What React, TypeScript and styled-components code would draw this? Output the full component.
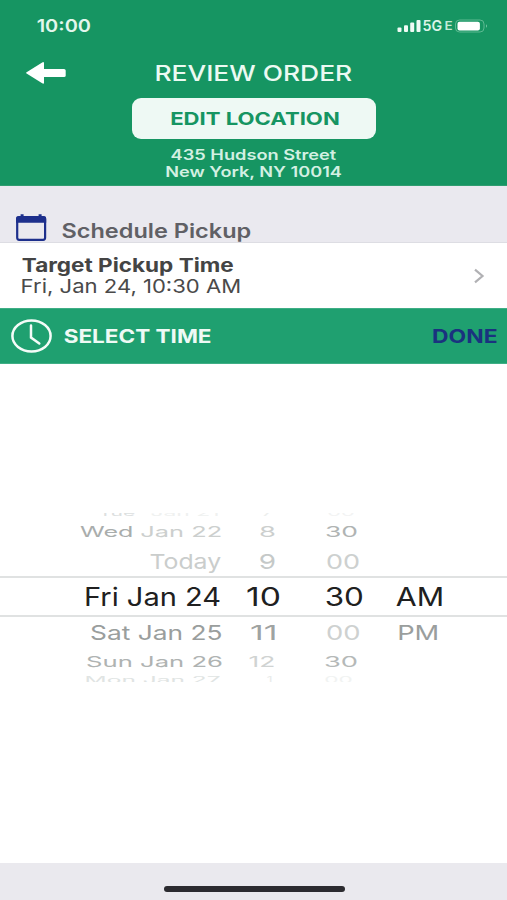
import React, { useLayoutEffect, useRef, useState } from "react";
import styled, { createGlobalStyle } from "styled-components";

const GlobalStyle = createGlobalStyle`
  * { box-sizing: border-box; }
  body { margin: 0; background: #fff; }
  #root { font-family: Inter, "Liberation Sans", sans-serif; }
`;

const Screen = styled.div`
  display: flex;
  flex-direction: column;
  width: 507px;
  height: 900px;
  overflow: hidden;
  background: #fff;
`;

/* A label whose glyphs are stretched to fill a given width. */
interface LabelProps {
  $w: number;
  $size: number;
  $line: number;
  $weight?: number;
  $color?: string;
  $left?: number;
}

const LabelBox = styled.span<LabelProps>`
  display: block;
  flex: none;
  width: ${(p) => p.$w}px;
  height: ${(p) => p.$line}px;
  line-height: ${(p) => p.$line}px;
  margin-left: ${(p) => p.$left ?? 0}px;
  font-size: ${(p) => p.$size}px;
  font-weight: ${(p) => p.$weight ?? 400};
  color: ${(p) => p.$color ?? "#fff"};
  text-align: left;
  white-space: nowrap;
`;

const Glyphs = styled.span`
  display: inline-block;
  transform-origin: 0 50%;
`;

interface WideProps {
  text: string;
  width: number;
  size: number;
  line: number;
  weight?: number;
  color?: string;
  left?: number;
}

/* Measured at ten times the size, as canvas rounds ink bounds to whole pixels. */
const MEASURE = 10;
/* Room left on each side for antialiased edges. */
const EDGE = 0.5;

function WideText({ text, width, size, line, weight, color, left }: WideProps) {
  const ref = useRef<HTMLSpanElement>(null);
  const [transform, setTransform] = useState("none");
  useLayoutEffect(() => {
    const ctx = document.createElement("canvas").getContext("2d");
    if (!ref.current || !ctx) return;
    const cs = getComputedStyle(ref.current);
    ctx.font = `${cs.fontWeight} ${size * MEASURE}px ${cs.fontFamily}`;
    const m = ctx.measureText(text);
    const inkLeft = m.actualBoundingBoxLeft / MEASURE;
    const inkRight = m.actualBoundingBoxRight / MEASURE;
    const scale = (width - 2 * EDGE) / (inkRight + inkLeft);
    setTransform(`translateX(${inkLeft * scale + EDGE}px) scaleX(${scale})`);
  }, [text, width, size, weight]);
  return (
    <LabelBox $w={width} $size={size} $line={line} $weight={weight} $color={color} $left={left}>
      <Glyphs ref={ref} style={{ transform }}>{text}</Glyphs>
    </LabelBox>
  );
}

const Header = styled.header`
  display: flex;
  flex-direction: column;
  height: 186px;
  flex: none;
  background: #169562;
  border-bottom: 1px solid #2f9d70;
`;

const StatusBar = styled.div`
  display: flex;
  align-items: center;
  height: 34px;
  margin-top: 9px;
  padding: 0 18px 0 37px;
`;

const StatusIcons = styled.div`
  display: flex;
  align-items: center;
  margin-left: auto;
`;

const TitleRow = styled.div`
  display: flex;
  align-items: center;
  height: 46px;
  margin-top: 7px;
  padding-left: 26px;
`;

const EditButton = styled.button`
  display: flex;
  align-items: center;
  justify-content: center;
  align-self: center;
  width: 244px;
  height: 41px;
  margin: 1.5px 0 8.5px 1px;
  padding: 2px 0 0 2px;
  border: 0;
  border-radius: 9px;
  background: #eef9f4;
  font-family: inherit;
`;

const Address = styled.div`
  display: flex;
  flex-direction: column;
  align-items: center;
  gap: 1px;
`;

const SectionHeading = styled.div`
  display: flex;
  align-items: flex-start;
  flex: none;
  height: 57px;
  padding: 27px 0 0 16px;
  background: #eae9ef;
  border-bottom: 1px solid #dddde3;
`;

const TargetRow = styled.div`
  display: flex;
  align-items: center;
  justify-content: space-between;
  flex: none;
  height: 65px;
  padding: 0 22px 0 21.5px;
`;

const TargetText = styled.div`
  display: flex;
  flex-direction: column;
`;

const SelectBar = styled.div`
  display: flex;
  align-items: center;
  flex: none;
  height: 56px;
  padding-left: 11px;
  background: #1fa070;
  border-top: 1px solid #3fae85;
  border-bottom: 1px solid #3fae85;
`;

const Picker = styled.main`
  flex: 1;
  padding-top: 149px;
`;

const WheelRow = styled.div<{ $height: number; $selected?: boolean; $align?: string }>`
  display: flex;
  align-items: ${(p) => p.$align ?? "center"};
  height: ${(p) => p.$height}px;
  overflow: hidden;
  ${(p) => p.$selected && "border-top: 2px solid #e0e2e2; border-bottom: 2px solid #e0e2e2;"}
`;

const BottomBar = styled.footer`
  display: flex;
  justify-content: center;
  flex: none;
  height: 37px;
  padding: 23px 0 0 2px;
  background: #eae9ee;
`;

const HomeIndicator = styled.div`
  width: 181px;
  height: 6px;
  border-radius: 3px;
  background: #2c2b30;
`;

const BatterySvg = styled.svg`
  margin-left: 3px;
`;

const Signal = () => (
  <svg width="24" height="14" viewBox="0 0 24 14" fill="#effbf5">
    <rect x="0.5" y="8.5" width="4" height="4.5" rx="1" />
    <rect x="7" y="6.3" width="4" height="6.7" rx="1" />
    <rect x="13.2" y="3.5" width="4" height="9.5" rx="1" />
    <rect x="19.5" y="1" width="4" height="12" rx="1" />
  </svg>
);

const Battery = () => (
  <BatterySvg width="34" height="14" viewBox="0 0 34 14">
    <rect x="0.5" y="1" width="28.5" height="12" rx="4" fill="none" stroke="#5cb991" strokeWidth="1" />
    <rect x="2.500" y="2.800" width="22.400" height="8.600" rx="2" fill="#fff" />
    <path d="M31 5.200c1.400.6 1.400 3 0 3.600z" fill="#6fc29f" />
  </BatterySvg>
);

const BackArrow = () => (
  <svg width="40" height="24" viewBox="0 0 40 24" fill="#fff">
    <path d="M.6 11.200 16.200 1.400Q18 .4 18 2.400V8H38Q39.700 8 39.700 9.500V14.700Q39.700 16 38 16H18V21.400Q18 23.400 16.200 22.300L.6 12.600Q-.4 11.900.6 11.200Z" />
  </svg>
);

const CalendarIcon = () => (
  <svg width="31" height="29" viewBox="0 0 31 29">
    <rect x="1.200" y="4.200" width="27.900" height="22.600" rx="2" fill="none" stroke="#1d2f8c" strokeWidth="2.200" />
    <path d="M0 9.800V5.500Q0 3.300 2.200 3.300H4.600V1.200H7.600V3.300H22.600V1.200H25.600V3.300H28Q30.200 3.300 30.200 5.500V9.800Z" fill="#1d2f8c" />
  </svg>
);

const ClockIcon = () => (
  <svg width="42" height="34" viewBox="0 0 42 34" fill="none" stroke="#f4fcf8" strokeWidth="2.500" strokeLinecap="round">
    <ellipse cx="20.500" cy="17" rx="19.100" ry="15.500" />
    <path d="M20 6.500V18.500L28.300 24.500" />
  </svg>
);

const Chevron = () => (
  <svg width="12" height="16" viewBox="0 0 12 16" fill="none" stroke="#b1b1b4" strokeWidth="2.200">
    <path d="M2 1.700 9.500 8 2 14.300" />
  </svg>
);

/* Pieces of a wheel row: text, left edge, width, colour. */
type Piece = [string, number, number, string];
interface WheelEntry {
  height: number;
  size: number;
  line: number;
  align?: string;
  selected?: boolean;
  pieces: Piece[];
}

const wheel: WheelEntry[] = [
  {
    height: 5, size: 9, line: 10, align: "flex-end",
    pieces: [["Tue", 99, 36, "#dce0df"], ["Jan 21", 151, 67, "#eff1f0"], ["7", 262, 11, "#eceeed"], ["00", 328, 26, "#f2f3f3"]],
  },
  {
    height: 28, size: 14.5, line: 28,
    pieces: [["Wed", 80, 52, "#a9adac"], ["Jan 22", 141, 80, "#cccfce"], ["8", 260, 15, "#cccfce"], ["30", 326, 31, "#b0b4b3"]],
  },
  {
    height: 30, size: 20.5, line: 31,
    pieces: [["Today", 150, 71, "#cacdcc"], ["9", 260, 15, "#c5c9c8"], ["00", 327, 32, "#cdd0cf"]],
  },
  {
    height: 41, size: 25.5, line: 37, selected: true,
    pieces: [["Fri Jan 24", 85.5, 134, "#202020"], ["10", 247, 32.5, "#202020"], ["30", 326, 36.5, "#202020"], ["AM", 395.5, 46, "#202020"]],
  },
  {
    height: 32, size: 20, line: 32,
    pieces: [["Sat Jan 25", 90.5, 130.5, "#9a9e9d"], ["11", 250.5, 24, "#9fa3a2"], ["00", 327, 32.5, "#ced1d0"], ["PM", 399, 38.5, "#9a9e9d"]],
  },
  {
    height: 26, size: 14.5, line: 26,
    pieces: [["Sun Jan 26", 87, 135, "#afb3b2"], ["12", 249, 25, "#d0d3d2"], ["30", 325, 32, "#b5b9b8"]],
  },
  {
    height: 7, size: 9, line: 10, align: "flex-start",
    pieces: [["Mon Jan 27", 86, 134, "#e0e4e3"], ["1", 267, 5, "#e8ebea"], ["00", 325, 27, "#f1f3f2"]],
  },
];

export default function App() {
  return (
    <Screen>
      <GlobalStyle />
      <Header>
        <StatusBar>
          <WideText text="10:00" width={53.500} size={17.200} line={34} weight={600} color="#e3f7ed" />
          <StatusIcons>
            <Signal />
            <WideText text="5G" width={19} size={14.500} line={16} weight={600} color="#dcf4e8" left={2.500} />
            <WideText text="E" width={7.500} size={12} line={12} weight={600} color="#c5ead8" left={2.500} />
            <Battery />
          </StatusIcons>
        </StatusBar>
        <TitleRow>
          <BackArrow />
          <WideText text="REVIEW ORDER" width={196} size={22} line={46} weight={500} color="#ecfaf3" left={90} />
        </TitleRow>
        <EditButton>
          <WideText text="EDIT LOCATION" width={168} size={17.700} line={40} weight={700} color="#169562" />
        </EditButton>
        <Address>
          <WideText text="435 Hudson Street" width={165.500} size={14.300} line={16} weight={600} color="#d3f0e2" />
          <WideText text="New York, NY 10014" width={176} size={14.300} line={16} weight={600} color="#d3f0e2" />
        </Address>
      </Header>
      <SectionHeading>
        <CalendarIcon />
        <WideText text="Schedule Pickup" width={189} size={19.800} line={36} weight={600} color="#606065" left={15} />
      </SectionHeading>
      <TargetRow>
        <TargetText>
          <WideText text="Target Pickup Time" width={211.500} size={18.600} line={22} weight={700} color="#444" />
          <WideText text="Fri, Jan 24, 10:30 AM" width={218} size={18.800} line={21} color="#4a4a4a" />
        </TargetText>
        <Chevron />
      </TargetRow>
      <SelectBar>
        <ClockIcon />
        <WideText text="SELECT TIME" width={147} size={19.200} line={54} weight={700} color="#eefaf5" left={10.500} />
        <WideText text="DONE" width={64} size={18.800} line={55} weight={700} color="#1a327f" left={222} />
      </SelectBar>
      <Picker>
        {wheel.map((row, i) => (
          <WheelRow key={i} $height={row.height} $selected={row.selected} $align={row.align}>
            {row.pieces.map(([text, x, w, color], j) => {
              const prev = row.pieces[j - 1];
              return (
                <WideText
                  key={j}
                  text={text}
                  width={w}
                  size={row.size}
                  line={row.line}
                  color={color}
                  left={x - (prev ? prev[1] + prev[2] : 0)}
                />
              );
            })}
          </WheelRow>
        ))}
      </Picker>
      <BottomBar>
        <HomeIndicator />
      </BottomBar>
    </Screen>
  );
}
